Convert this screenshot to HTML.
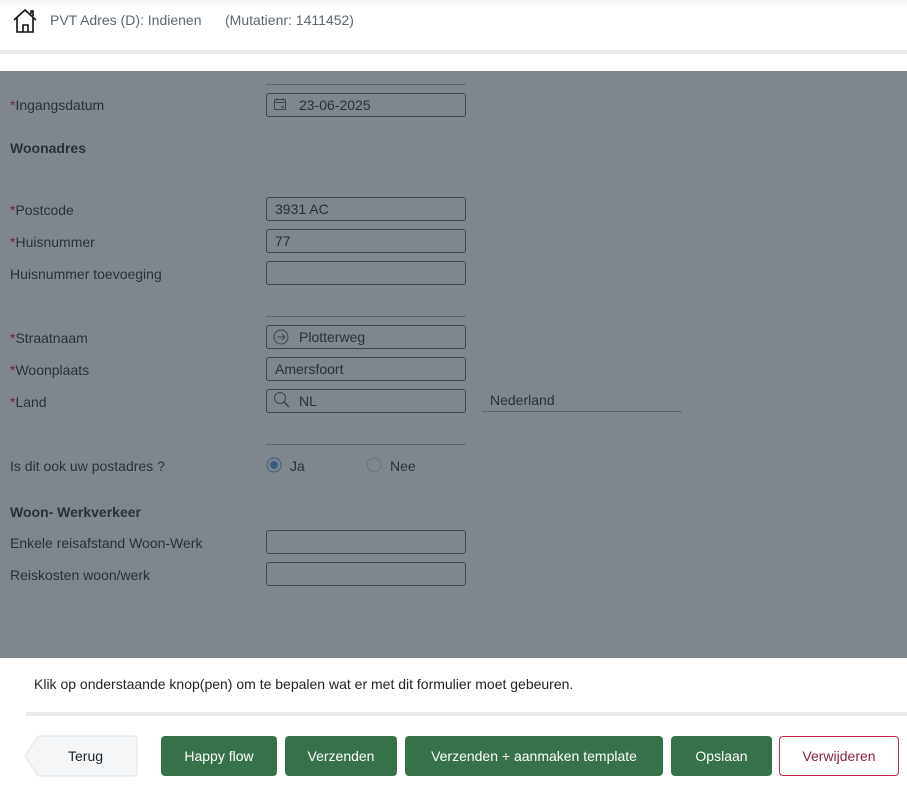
<!DOCTYPE html>
<html><head><style>
*{margin:0;padding:0;box-sizing:border-box}
body{width:907px;height:812px;position:relative;background:#fff;font-family:"Liberation Sans",sans-serif;font-size:14px;overflow:hidden}
.a{position:absolute}
.ov{left:0;top:71px;width:907px;height:587px;background:#7f878c}
.lb{left:10px;color:#2b3036;font-size:14px}
.lb b{font-weight:bold}
.st{color:#6b2a35}
.in{left:266px;width:200px;height:24px;border:1px solid #3f464c;border-radius:3px;color:#2b3036;padding-left:8px;line-height:22px}
.hl{left:266px;width:200px;height:1px;background:#5c6469}
.btn{top:736px;height:40px;border-radius:4px;background:#35724a;color:#fff;text-align:center;line-height:40px;font-size:14px}
</style></head><body>
<div class="a" style="left:0;top:0;width:907px;height:8px;background:linear-gradient(#f3f4f6,#fff)"></div>
<svg class="a" style="left:12px;top:8px" width="28" height="26" viewBox="0 0 28 26"><path d="M2 12 L13 2 L24 12 M5 10 V24 H21 V10 M11 24 V17 H16 V24 M19 6 V3 H21 V8" fill="none" stroke="#111" stroke-width="1.6"/></svg>
<div class="a" style="left:50px;top:12px;color:#5a6670;font-size:14px">PVT Adres (D): Indienen</div>
<div class="a" style="left:225px;top:12px;color:#5a6670;font-size:14px">(Mutatienr: 1411452)</div>
<div class="a" style="left:0;top:50px;width:907px;height:4px;background:#e7ebee"></div>
<div class="a ov"></div>
<div class="a hl" style="top:84px"></div>
<div class="a lb" style="top:97px"><span class="st">*</span>Ingangsdatum</div>
<div class="a in" style="top:93px;padding-left:32px">23-06-2025</div>
<svg class="a" style="left:273px;top:97px" width="14" height="14" viewBox="0 0 14 14"><rect x="1.5" y="2.5" width="11" height="10" rx="1" fill="none" stroke="#3f464c"/><path d="M1.5 5.5H12.5M4 1V4M10 1V4" stroke="#3f464c"/><rect x="8.5" y="9" width="2" height="2" fill="#3f464c"/></svg>
<div class="a lb" style="top:140px"><b>Woonadres</b></div>
<div class="a lb" style="top:202px"><span class="st">*</span>Postcode</div>
<div class="a in" style="top:197px">3931 AC</div>
<div class="a lb" style="top:234px"><span class="st">*</span>Huisnummer</div>
<div class="a in" style="top:229px">77</div>
<div class="a lb" style="top:266px">Huisnummer toevoeging</div>
<div class="a in" style="top:261px"></div>
<div class="a hl" style="top:316px"></div>
<div class="a lb" style="top:330px"><span class="st">*</span>Straatnaam</div>
<div class="a in" style="top:325px;padding-left:32px">Plotterweg</div>
<svg class="a" style="left:273px;top:329px" width="16" height="16" viewBox="0 0 16 16"><circle cx="8" cy="8" r="7" fill="none" stroke="#3f464c"/><path d="M4 8H12M9 5L12 8L9 11" fill="none" stroke="#3f464c"/></svg>
<div class="a lb" style="top:362px"><span class="st">*</span>Woonplaats</div>
<div class="a in" style="top:357px">Amersfoort</div>
<div class="a lb" style="top:394px"><span class="st">*</span>Land</div>
<div class="a in" style="top:389px;padding-left:32px">NL</div>
<svg class="a" style="left:273px;top:391px" width="18" height="18" viewBox="0 0 18 18"><circle cx="7" cy="7" r="5.5" fill="none" stroke="#3f464c"/><path d="M11 11L16 16" stroke="#3f464c" stroke-width="1.5"/></svg>
<div class="a" style="left:490px;top:392px;color:#2b3036">Nederland</div>
<div class="a" style="left:482px;top:411px;width:200px;height:1px;background:#5c6469"></div>
<div class="a hl" style="top:444px"></div>
<div class="a lb" style="top:458px">Is dit ook uw postadres ?</div>
<svg class="a" style="left:266px;top:457px" width="16" height="16"><circle cx="8" cy="8" r="7" fill="none" stroke="#3d5a80"/><circle cx="8" cy="8" r="4" fill="#3d5a80"/></svg>
<div class="a" style="left:290px;top:458px;color:#2b3036">Ja</div>
<svg class="a" style="left:366px;top:457px" width="16" height="16"><circle cx="8" cy="8" r="7" fill="none" stroke="#6b7378"/></svg>
<div class="a" style="left:390px;top:458px;color:#2b3036">Nee</div>
<div class="a lb" style="top:504px"><b>Woon- Werkverkeer</b></div>
<div class="a lb" style="top:535px">Enkele reisafstand Woon-Werk</div>
<div class="a in" style="top:530px"></div>
<div class="a lb" style="top:567px">Reiskosten woon/werk</div>
<div class="a in" style="top:562px"></div>
<div class="a" style="left:34px;top:676px;color:#1e2226;font-size:14px">Klik op onderstaande knop(pen) om te bepalen wat er met dit formulier moet gebeuren.</div>
<div class="a" style="left:26px;top:712px;width:881px;height:4px;background:#e7ebee"></div>
<svg class="a" style="left:24px;top:735px" width="115" height="43"><path d="M14 1H110a3 3 0 0 1 3 3V38a3 3 0 0 1-3 3H14L1 21Z" fill="#f5f6f8" stroke="#dde2e6"/></svg>
<div class="a" style="left:68px;top:748px;color:#1e2226">Terug</div>
<div class="a btn" style="left:161px;width:116px">Happy flow</div>
<div class="a btn" style="left:285px;width:112px">Verzenden</div>
<div class="a btn" style="left:405px;width:258px">Verzenden + aanmaken template</div>
<div class="a btn" style="left:671px;width:101px">Opslaan</div>
<div class="a btn" style="left:779px;width:120px;background:#fff;border:1px solid #c8264a;color:#8a2440;line-height:38px">Verwijderen</div>
</body></html>
